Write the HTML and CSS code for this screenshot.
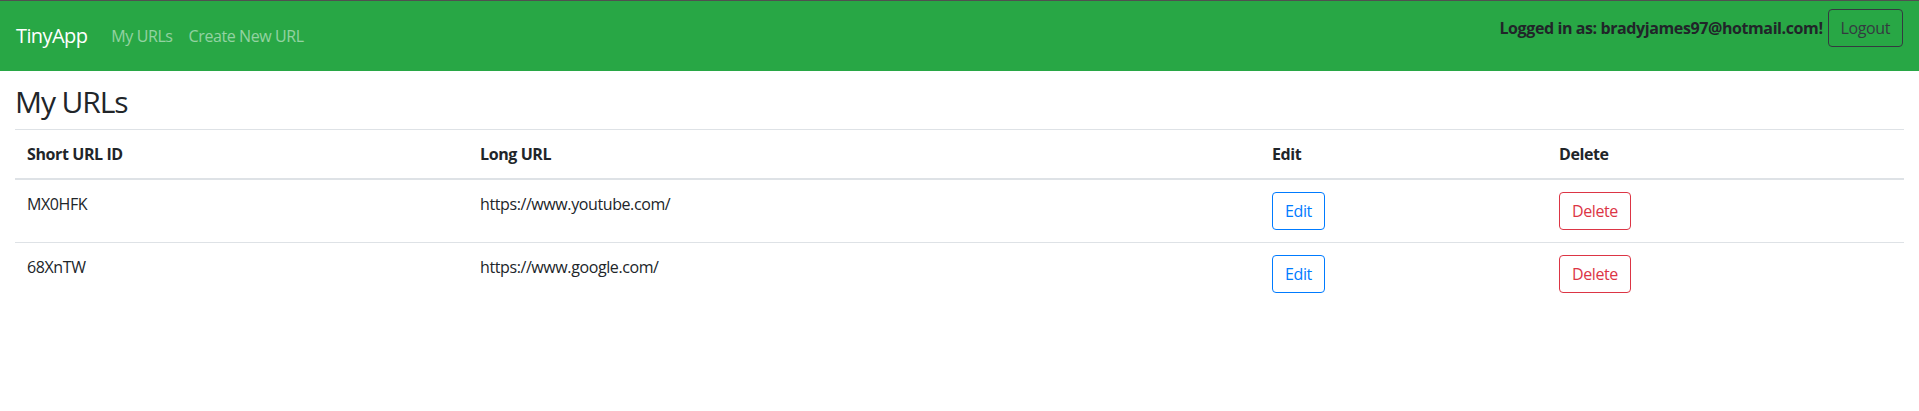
FILE: index.html
```html
<!DOCTYPE html>
<html lang="en">
<head>
<meta charset="utf-8">
<title>TinyApp</title>
<link rel="stylesheet" href="styles.css">
</head>
<body>
<nav class="navbar">
  <a class="brand" href="#">TinyApp</a>
  <ul class="nav">
    <li><a class="nav-link" href="#">My URLs</a></li>
    <li><a class="nav-link" href="#">Create New URL</a></li>
  </ul>
  <form class="login-form">
    <span class="user-label">Logged in as: bradyjames97@hotmail.com!</span>
    <button type="button" class="btn btn-dark-outline">Logout</button>
  </form>
</nav>
<main class="container">
  <h2 class="page-title">My URLs</h2>
  <table class="table">
    <colgroup>
      <col class="col-short">
      <col class="col-long">
      <col class="col-edit">
      <col class="col-delete">
    </colgroup>
    <thead>
      <tr>
        <th>Short URL ID</th>
        <th>Long URL</th>
        <th>Edit</th>
        <th>Delete</th>
      </tr>
    </thead>
    <tbody>
      <tr>
        <td>MX0HFK</td>
        <td>https://www.youtube.com/</td>
        <td><button type="button" class="btn btn-primary-outline">Edit</button></td>
        <td><button type="button" class="btn btn-danger-outline">Delete</button></td>
      </tr>
      <tr>
        <td>68XnTW</td>
        <td>https://www.google.com/</td>
        <td><button type="button" class="btn btn-primary-outline">Edit</button></td>
        <td><button type="button" class="btn btn-danger-outline">Delete</button></td>
      </tr>
    </tbody>
  </table>
</main>
</body>
</html>
```
FILE: styles.css
```css
* { box-sizing: border-box; }
html, body { margin: 0; padding: 0; }
body {
  font-family: "Open Sans", "Noto Sans", "Liberation Sans", sans-serif;
  font-size: 16px;
  line-height: 24px;
  letter-spacing: -0.4px;
  color: #212529;
  background: #fff;
}
.navbar {
  display: flex;
  align-items: center;
  background: #28a745;
  border-top: 1px solid #505050;
  padding: 8px 16px;
  height: 71px;
}
.brand {
  color: #fff;
  text-decoration: none;
  font-size: 20px;
  line-height: 30px;
  letter-spacing: -0.6px;
  padding: 5px 0;
  margin-right: 16px;
}
.nav {
  display: flex;
  list-style: none;
  margin: 0;
  padding: 0;
  flex: 1;
}
.nav-link {
  display: block;
  padding: 8px;
  color: rgba(255, 255, 255, 0.5);
  text-decoration: none;
}
.login-form {
  display: flex;
  align-items: center;
  gap: 5px;
  margin: 0 0 16px 0;
}
.user-label {
  font-weight: 700;
  color: #212529;
}
.btn {
  display: inline-block;
  font-family: inherit;
  font-size: 16px;
  line-height: 24px;
  letter-spacing: -0.4px;
  padding: 6px 12px;
  background: transparent;
  border: 1px solid transparent;
  border-radius: 4px;
  cursor: pointer;
}
.btn-dark-outline { color: #343a40; border-color: #343a40; }
.btn-primary-outline { color: #007bff; border-color: #007bff; }
.btn-danger-outline { color: #dc3545; border-color: #dc3545; }
.container {
  padding: 12px 15px 0;
}
.page-title {
  font-size: 30px;
  line-height: 38px;
  font-weight: 500;
  letter-spacing: -1.1px;
  margin: 0 0 8px 0;
}
.table {
  width: 100%;
  border-collapse: collapse;
  table-layout: fixed;
}
.col-short { width: 453px; }
.col-long { width: 792px; }
.col-edit { width: 287px; }
.table th, .table td {
  text-align: left;
  padding: 12px;
  vertical-align: top;
  border-top: 1px solid #dee2e6;
}
.table thead th {
  vertical-align: bottom;
  border-bottom: 2px solid #dee2e6;
  font-weight: 700;
}
```
